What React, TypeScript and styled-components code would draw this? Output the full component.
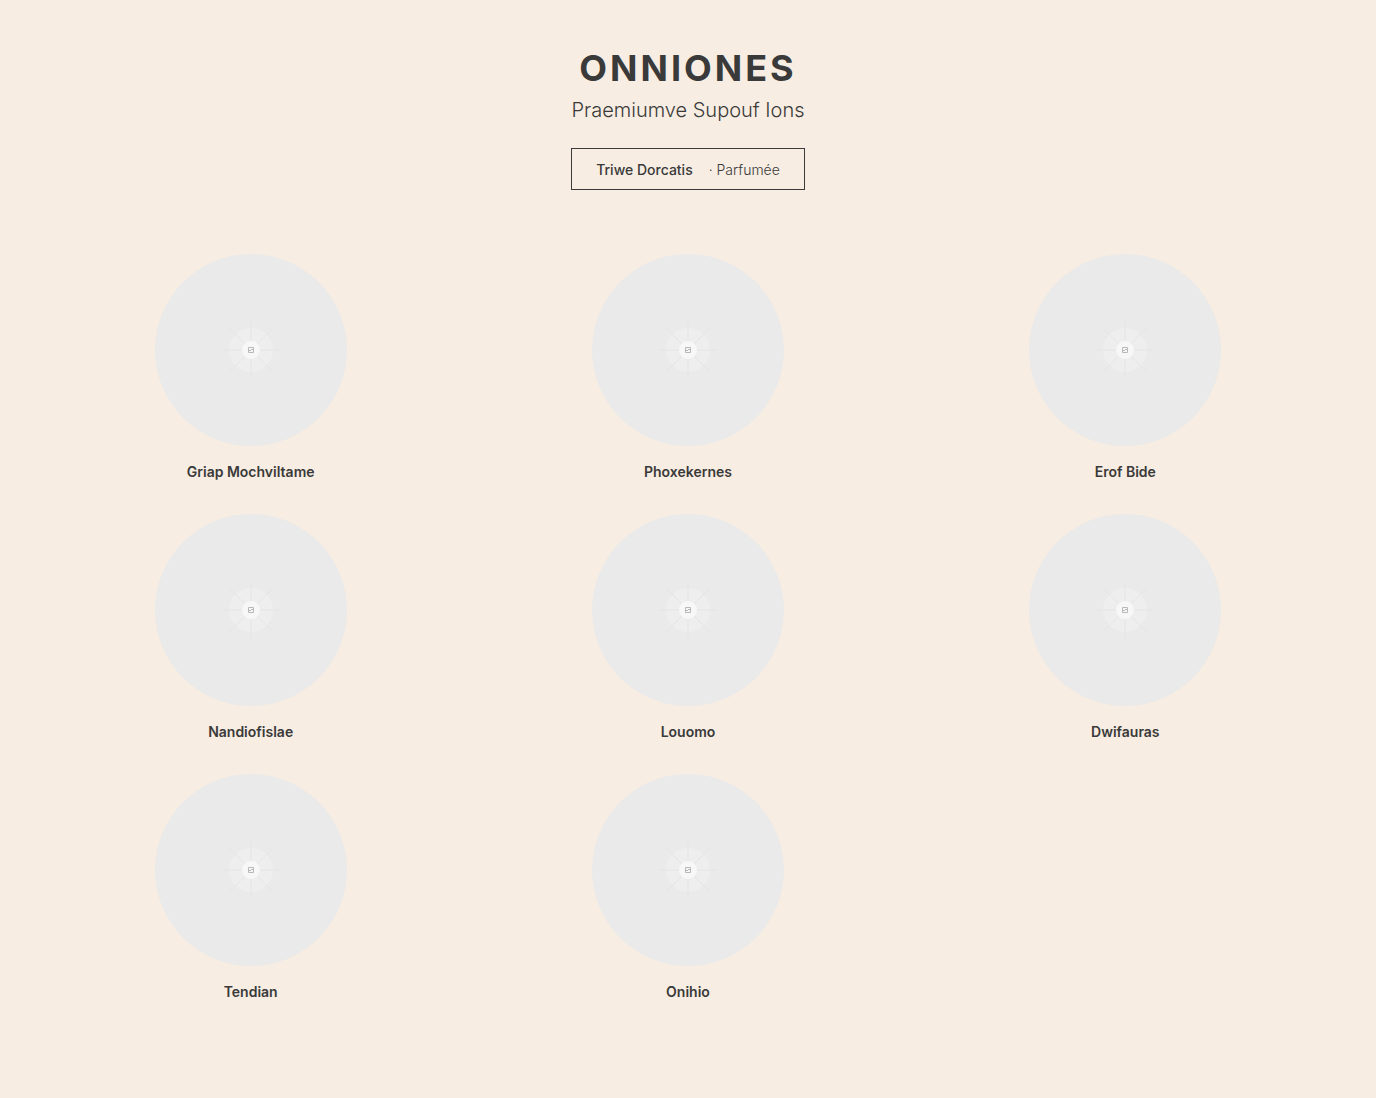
import React from 'react';
import styled, { createGlobalStyle } from 'styled-components';

const GlobalStyle = createGlobalStyle`
  *, *::before, *::after { box-sizing: border-box; }
  body {
    margin: 0;
    background: #f7ede2;
    color: #3a3a3a;
    font-family: Inter, "Liberation Sans", sans-serif;
  }
`;

const Page = styled.main`
  min-height: 100vh;
  padding: 48px;
`;

const Header = styled.header`
  display: flex;
  flex-direction: column;
  align-items: center;
  text-align: center;
  margin-bottom: 64px;
`;

const Title = styled.h1`
  margin: 0 0 8px;
  font-size: 36px;
  line-height: 40px;
  font-weight: 700;
  letter-spacing: 3px;
`;

const Subtitle = styled.p`
  margin: 0 0 24px;
  font-size: 20px;
  line-height: 28px;
  font-weight: 300;
`;

const FilterButton = styled.button`
  display: flex;
  align-items: center;
  gap: 16px;
  min-height: 42px;
  padding: 0 24px;
  border: 1px solid #3a3a3a;
  border-radius: 0;
  background: transparent;
  color: inherit;
  font: 500 14px/21px Inter, "Liberation Sans", sans-serif;
  cursor: pointer;
`;

const FilterDetail = styled.span`
  font-weight: 300;
`;

const Grid = styled.ul`
  display: grid;
  grid-template-columns: repeat(3, 1fr);
  gap: 32px;
  margin: 0;
  padding: 0;
  list-style: none;
`;

const Item = styled.li`
  display: flex;
  flex-direction: column;
  align-items: center;
  gap: 16px;
`;

const Disc = styled.div`
  display: flex;
  align-items: center;
  justify-content: center;
  width: 192px;
  height: 192px;
  border-radius: 50%;
  background: #eaeaea;
`;

const Name = styled.h2`
  margin: 0;
  font-size: 14px;
  line-height: 20px;
  font-weight: 600;
`;

const Placeholder = () => (
  <svg width="56" height="56" viewBox="0 0 56 56" fill="none" aria-hidden="true">
    <circle cx="28" cy="28" r="22" fill="#eeeeee" />
    <path
      d="M28 0V56M0 28H56M6 6L50 50M50 6L6 50"
      stroke="#e4e4e4"
      strokeWidth="1"
    />
    <circle cx="28" cy="28" r="9" fill="#f7f7f7" />
    <path d="M25.5 25.5H30.5V30.5H25.5ZM25.5 28.5H28M28 27.5H30.5" stroke="#b8b8b8" strokeWidth="1" />
  </svg>
);

const names = [
  'Griap Mochviltame',
  'Phoxekernes',
  'Erof Bide',
  'Nandiofislae',
  'Louomo',
  'Dwifauras',
  'Tendian',
  'Onihio',
];

export default function App() {
  return (
    <>
      <GlobalStyle />
      <Page>
        <Header>
          <Title>ONNIONES</Title>
          <Subtitle>Praemiumve Supouf Ions</Subtitle>
          <FilterButton type="button">
            <span>Triwe Dorcatis</span>
            <FilterDetail>· Parfumée</FilterDetail>
          </FilterButton>
        </Header>
        <Grid>
          {names.map((name) => (
            <Item key={name}>
              <Disc>
                <Placeholder />
              </Disc>
              <Name>{name}</Name>
            </Item>
          ))}
        </Grid>
      </Page>
    </>
  );
}
